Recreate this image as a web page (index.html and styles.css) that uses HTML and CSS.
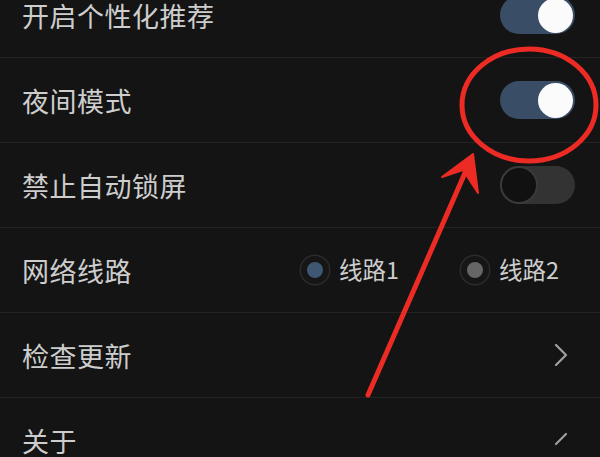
FILE: index.html
```html
<!DOCTYPE html>
<html lang="zh">
<head>
<meta charset="utf-8">
<link rel="stylesheet" href="styles.css">
</head>
<body>
<div class="screen">
  <ul class="list">
    <li class="row">
      <span class="label">开启个性化推荐</span>
      <span class="switch on"><span class="knob"></span></span>
    </li>
    <li class="row">
      <span class="label">夜间模式</span>
      <span class="switch on"><span class="knob"></span></span>
    </li>
    <li class="row">
      <span class="label">禁止自动锁屏</span>
      <span class="switch off"><span class="knob"></span></span>
    </li>
    <li class="row">
      <span class="label">网络线路</span>
      <span class="radios">
        <span class="radio"><span class="dot sel"></span><span class="rtext">线路1</span></span>
        <span class="radio"><span class="dot"></span><span class="rtext">线路2</span></span>
      </span>
    </li>
    <li class="row">
      <span class="label">检查更新</span>
      <svg class="chev" width="14" height="22" viewBox="0 0 14 22"><path d="M2 1 L12 11 L2 21" fill="none" stroke="#a0a0a0" stroke-width="2.2" stroke-linecap="round" stroke-linejoin="round"/></svg>
    </li>
    <li class="row">
      <span class="label">关于</span>
      <svg class="chev partial" width="14" height="22" viewBox="0 0 14 22"><path d="M2 15 L12 5" fill="none" stroke="#a0a0a0" stroke-width="2.2" stroke-linecap="round"/></svg>
    </li>
  </ul>
  <svg class="annot" width="600" height="457" viewBox="0 0 600 457">
    <ellipse cx="529" cy="105" rx="67" ry="56" fill="none" stroke="#ec2b25" stroke-width="5"/>
    <line x1="368" y1="395" x2="468" y2="166" stroke="#ec2b25" stroke-width="5" stroke-linecap="round"/>
    <polygon points="473,154 442,177 463,170 478,193" fill="#ec2b25" stroke="#ec2b25" stroke-width="2" stroke-linejoin="round"/>
  </svg>
</div>
</body>
</html>
```

FILE: styles.css
```css
html, body {
  margin: 0;
  padding: 0;
  background: #141414;
}
.screen {
  position: relative;
  width: 600px;
  height: 457px;
  overflow: hidden;
  background: #141414;
  font-family: "Noto Sans CJK SC", "Noto Sans", sans-serif;
}
.list {
  list-style: none;
  margin: -27px 0 0 0;
  padding: 0;
}
.row {
  height: 84px;
  border-bottom: 1px solid #232323;
  display: flex;
  align-items: center;
  justify-content: space-between;
  padding: 0 25px 0 22px;
}
.label {
  color: #cdcdcd;
  font-size: 27px;
  letter-spacing: 0.5px;
  line-height: 1;
}
.switch {
  width: 75px;
  height: 38px;
  border-radius: 19px;
  display: flex;
  align-items: center;
  box-sizing: border-box;
}
.switch.on {
  background: #3a4d66;
  justify-content: flex-end;
  padding-right: 2px;
}
.switch.on .knob {
  width: 35px;
  height: 35px;
  border-radius: 50%;
  background: #fbfbfb;
}
.switch.off {
  background: #333333;
  justify-content: flex-start;
}
.switch.off .knob {
  width: 38px;
  height: 38px;
  border-radius: 50%;
  background: #111111;
  border: 2px solid #3a3a3a;
  box-sizing: border-box;
}
.radios {
  display: flex;
  align-items: center;
  gap: 62px;
  margin-right: 16px;
}
.radio {
  display: flex;
  align-items: center;
  gap: 10px;
}
.dot {
  width: 28px;
  height: 28px;
  border-radius: 50%;
  border: 6px solid #161616;
  box-shadow: 0 0 0 1.5px #2c2c2c;
  background: #666666;
  box-sizing: border-box;
}
.dot.sel {
  background: #3e5874;
}
.rtext {
  color: #cdcdcd;
  font-size: 23.5px;
  line-height: 1;
}
.chev {
  margin-right: 7px;
}
.annot {
  position: absolute;
  left: 0;
  top: 0;
  pointer-events: none;
}
```
